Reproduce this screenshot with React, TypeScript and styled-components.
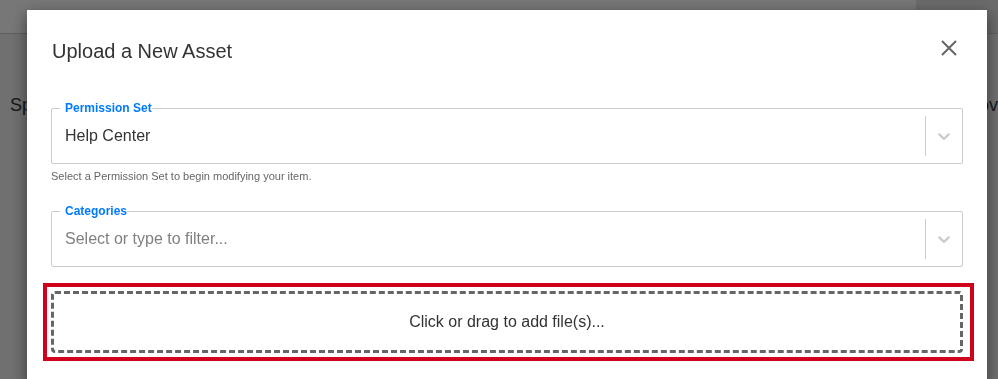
import styled, { createGlobalStyle } from 'styled-components';

const GlobalStyle = createGlobalStyle`
  html, body {
    margin: 0;
    padding: 0;
    overflow: hidden;
  }
  body {
    font-family: 'Liberation Sans', Arial, sans-serif;
    background: #f0f0f0;
    color: #333;
  }
  * {
    box-sizing: border-box;
  }
`;

const ChevronIcon = () => (
  <svg width='20' height='20' viewBox='0 0 20 20' aria-hidden='true'>
    <path
      fill='currentColor'
      d='M4.516 7.548c0.436-0.446 1.043-0.481 1.576 0l3.908 3.747 3.908-3.747c0.533-0.481 1.141-0.446 1.574 0 0.436 0.445 0.408 1.197 0 1.615-0.406 0.418-4.695 4.502-4.695 4.502-0.217 0.223-0.502 0.335-0.787 0.335s-0.57-0.112-0.789-0.335c0 0-4.287-4.084-4.695-4.502s-0.436-1.17 0-1.615z'
    />
  </svg>
);

const CloseIcon = () => (
  <svg width='16' height='16' viewBox='0 0 16 16' aria-hidden='true'>
    <path d='M1 1 L15 15 M15 1 L1 15' stroke='currentColor' strokeWidth='2' fill='none' />
  </svg>
);

type SelectFieldProps = {
  label: string;
  value?: string;
  placeholder?: string;
};

function SelectField({ label, value, placeholder }: SelectFieldProps) {
  return (
    <Field>
      <Legend>{label}</Legend>
      <Control>
        <ValueText $placeholder={!value}>{value || placeholder}</ValueText>
        <Separator />
        <Indicator>
          <ChevronIcon />
        </Indicator>
      </Control>
    </Field>
  );
}

export default function App() {
  return (
    <>
      <GlobalStyle />
      <Page>
        <TopBar>
          <TopBarButton />
        </TopBar>
        <PageRow>
          <PageHeading>Spaces</PageHeading>
          <PageHeading>Remove</PageHeading>
        </PageRow>
      </Page>

      <Backdrop>
        <Modal>
          <ModalHeader>
            <ModalTitle>Upload a New Asset</ModalTitle>
            <CloseButton aria-label='Close'>
              <CloseIcon />
            </CloseButton>
          </ModalHeader>
          <ModalBody>
            <SelectField label='Permission Set' value='Help Center' />
            <HelpText>Select a Permission Set to begin modifying your item.</HelpText>
            <Spacer $size={20} />
            <SelectField label='Categories' placeholder='Select or type to filter...' />
            <Highlight>
              <DropZone>Click or drag to add file(s)...</DropZone>
            </Highlight>
          </ModalBody>
        </Modal>
      </Backdrop>
    </>
  );
}

const Page = styled.div`
  min-height: 100vh;
`;

const TopBar = styled.header`
  height: 34px;
  background: #fff;
  border-bottom: 1px solid #cdcdcd;
  display: flex;
  justify-content: flex-end;
`;

const TopBarButton = styled.div`
  width: 82px;
  height: 100%;
  background: #e4e4e4;
`;

const PageRow = styled.div`
  display: flex;
  justify-content: space-between;
  padding: 59px 0 0 10px;
  margin-right: -10px;
`;

const PageHeading = styled.h2`
  margin: 0;
  font-size: 18px;
  line-height: 24px;
  font-weight: normal;
  color: #333;
`;

const Backdrop = styled.div`
  position: fixed;
  inset: 0;
  background: rgba(0, 0, 0, 0.533);
  display: flex;
  align-items: flex-start;
  padding: 10px 0 0 27px;
`;

const Modal = styled.div`
  width: 960px;
  background: #fff;
  box-shadow: 0 5px 15px rgba(0, 0, 0, 0.5);
  padding-bottom: 24px;
`;

const ModalHeader = styled.div`
  display: flex;
  justify-content: space-between;
  align-items: flex-start;
  padding: 29px 24px 0 25px;
`;

const ModalTitle = styled.h4`
  margin: 0;
  font-size: 20px;
  line-height: 24px;
  font-weight: normal;
  color: #333;
`;

const CloseButton = styled.button`
  width: 22px;
  height: 22px;
  margin: -2px 3px 0 0;
  padding: 0;
  border: none;
  background: transparent;
  color: #666;
  display: flex;
  align-items: center;
  justify-content: center;
  cursor: pointer;
`;

const ModalBody = styled.div`
  padding: 38px 24px 0;
  display: flex;
  flex-direction: column;
`;

const Field = styled.fieldset`
  margin: 0;
  padding: 0 0 7px 8px;
  border: 1px solid #ccc;
  border-radius: 2px;
  min-width: 0;
`;

const Legend = styled.legend`
  padding: 0 0 0 5px;
  font-size: 12px;
  line-height: 15px;
  font-weight: bold;
  color: #007bff;
`;

const Control = styled.div`
  height: 40px;
  display: flex;
  align-items: center;
`;

const ValueText = styled.div<{ $placeholder: boolean }>`
  flex: 1;
  padding-left: 5px;
  font-size: 16px;
  color: ${(p) => (p.$placeholder ? '#808080' : '#333')};
`;

const Separator = styled.span`
  align-self: stretch;
  width: 1px;
  background: #ccc;
`;

const Indicator = styled.div`
  padding: 0 8px;
  color: #ccc;
  display: flex;
  align-items: center;
`;

const HelpText = styled.p`
  margin: 4px 0 0;
  font-size: 11px;
  line-height: 16px;
  color: #666;
`;

const Spacer = styled.div<{ $size: number }>`
  height: ${(p) => p.$size}px;
  flex-shrink: 0;
`;

const Highlight = styled.div`
  margin: 16px -11px 0 -8px;
  padding: 4px 7px 4px 4px;
  border: 4px solid #d0021b;
`;

const DropZone = styled.div`
  height: 62px;
  border: 3px dashed #666;
  border-radius: 4px;
  display: flex;
  align-items: center;
  justify-content: center;
  font-size: 16px;
  color: #333;
  cursor: pointer;
`;
